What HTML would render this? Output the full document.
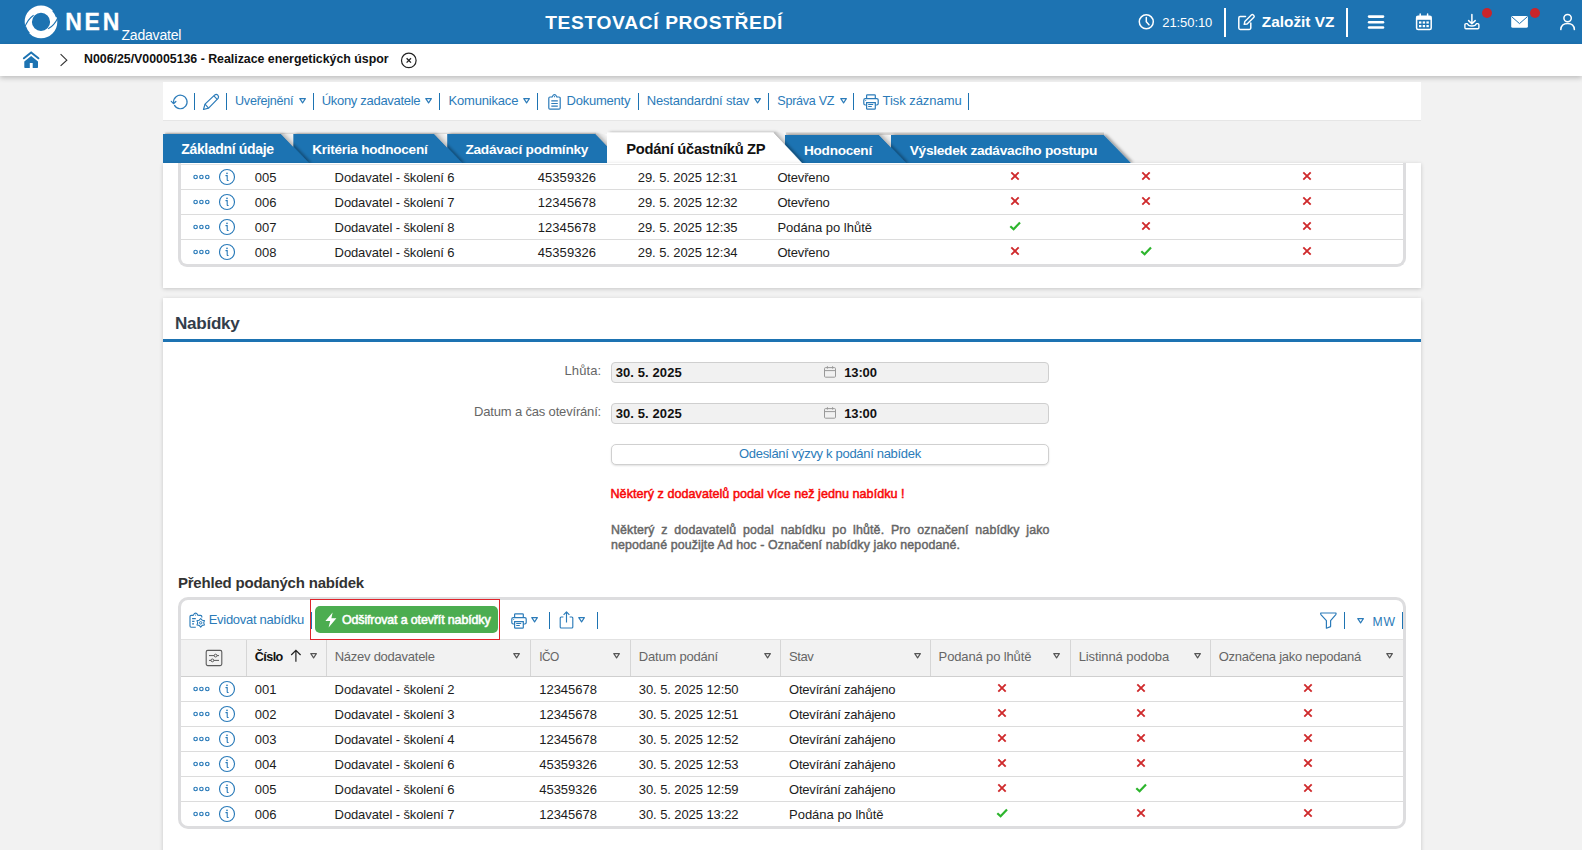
<!DOCTYPE html>
<html lang="cs"><head><meta charset="utf-8"><title>NEN - Zadavatel</title>
<style>
html,body{margin:0;padding:0}
body{width:1582px;height:850px;overflow:hidden;background:#f2f2f2;font-family:"Liberation Sans",sans-serif;color:#1c1c1c;position:relative}
span{position:absolute;white-space:pre;line-height:1}
div,svg,p{position:absolute;margin:0}
svg{overflow:visible}
.hdr{left:0;top:0;width:1582px;height:44px;background:#1d73b2;color:#fff}
.crumb{left:0;top:44px;width:1582px;height:32px;background:#fff;box-shadow:0 2px 5px rgba(0,0,0,.22)}
.tbar{left:163px;top:82px;width:1258px;height:38px;background:#fff;border-bottom:1px solid #e6e6e6;color:#2b7bb9}
.sep{width:1px;background:#1d73b2}
.card{background:#fff;box-shadow:0 1px 4px rgba(0,0,0,.18)}
.row{left:0;width:100%;height:24px;border-bottom:1px solid #dcdcdc}
</style></head><body>

<div class="hdr">
<svg style="left:0;top:0" width="200" height="44" viewBox="0 0 200 44">
<circle cx="41" cy="21.9" r="12.7" fill="none" stroke="#fff" stroke-width="7.2"/>
<path d="M24.4 28.4C26.2 22.6 28.6 18.6 33.6 15.2" fill="none" stroke="#1d73b2" stroke-width="1.1"/>
<path d="M57.6 18.2C55.6 22.6 53.2 26 48.2 28.8" fill="none" stroke="#1d73b2" stroke-width="1.1"/>
<path d="M25.41 26.67A16.3 16.3 0 0 0 29.27 33.22" fill="none" stroke="#1d73b2" stroke-width="1.5"/>
<path d="M56.59 17.13A16.3 16.3 0 0 0 52.73 10.58" fill="none" stroke="#1d73b2" stroke-width="1.5"/>
</svg>
<span style="left:65.20px;top:11px;font-size:23px;font-weight:700;color:#fff;letter-spacing:2.819px;-webkit-text-stroke:0.3px currentColor">NEN</span>
<span style="left:121.50px;top:28px;font-size:14px;color:#fff;letter-spacing:-0.198px">Zadavatel</span>
<span style="left:545.20px;top:13px;font-size:19.2px;font-weight:700;color:#fff;letter-spacing:0.660px">TESTOVACÍ PROSTŘEDÍ</span>
<svg style="left:1136px;top:12px" width="22" height="22" viewBox="0 0 22 22"><circle cx="10.3" cy="9.8" r="7" fill="none" stroke="#fff" stroke-width="1.5"/><path d="M10.3 5.4V9.8L13 12.8" fill="none" stroke="#fff" stroke-width="1.5" stroke-linecap="round"/></svg>
<span style="left:1162.30px;top:16px;font-size:13px;color:#fff;letter-spacing:-0.087px">21:50:10</span>
<div style="left:1224px;top:8px;width:2px;height:29px;background:#fff"></div>
<svg style="left:1236px;top:12px" width="22" height="22" viewBox="0 0 22 22"><path d="M9.5 4.5H4.2Q2.8 4.5 2.8 5.9V16Q2.8 17.4 4.2 17.4H13.4Q14.8 17.4 14.8 16V11" fill="none" stroke="#fff" stroke-width="1.5" stroke-linecap="round"/><path d="M8.2 12.4L8.8 9.6L15.6 2.8Q16.4 2.2 17.3 3L18 3.8Q18.6 4.6 17.9 5.3L11.1 12Z" fill="none" stroke="#fff" stroke-width="1.4" stroke-linejoin="round"/></svg>
<span style="left:1261.80px;top:14px;font-size:15.4px;font-weight:700;color:#fff;letter-spacing:-0.010px">Založit VZ</span>
<div style="left:1346px;top:8px;width:2px;height:29px;background:#fff"></div>
<svg style="left:1366px;top:12px" width="22" height="22" viewBox="0 0 22 22"><g stroke="#fff" stroke-width="2.6" stroke-linecap="round"><path d="M3.1 4.6H17"/><path d="M3.1 10.2H17"/><path d="M3.1 15.5H17"/></g></svg>
<svg style="left:1414px;top:12px" width="22" height="22" viewBox="0 0 22 22"><rect x="2.6" y="4.2" width="14.6" height="13.2" rx="1.5" fill="none" stroke="#fff" stroke-width="1.5"/><rect x="2.6" y="4.2" width="14.6" height="3.6" fill="#fff"/><path d="M6.2 2V5M13.6 2V5" stroke="#fff" stroke-width="1.5" stroke-linecap="round"/><g fill="#fff"><rect x="5" y="9.4" width="2.4" height="2.2"/><rect x="8.7" y="9.4" width="2.4" height="2.2"/><rect x="12.4" y="9.4" width="2.4" height="2.2"/><rect x="5" y="13" width="2.4" height="2.2"/><rect x="8.7" y="13" width="2.4" height="2.2"/><rect x="12.4" y="13" width="2.4" height="2.2"/></g></svg>
<svg style="left:1462px;top:12px" width="22" height="22" viewBox="0 0 22 22"><path d="M9.9 2.4V11.6M6.6 8.6L9.9 11.8L13.2 8.6" fill="none" stroke="#fff" stroke-width="1.5" stroke-linecap="round" stroke-linejoin="round"/><path d="M5.4 11.6H4Q2.9 11.6 2.9 12.7V15.6Q2.9 16.8 4 16.8H15.8Q16.9 16.8 16.9 15.6V12.7Q16.9 11.6 15.8 11.6H14.4Q13.6 14 9.9 14Q6.2 14 5.4 11.6Z" fill="none" stroke="#fff" stroke-width="1.4" stroke-linejoin="round"/></svg>
<div style="left:1482px;top:8.2px;width:10px;height:10px;border-radius:50%;background:#c9252b"></div>
<svg style="left:1509px;top:12px" width="22" height="22" viewBox="0 0 22 22"><rect x="2.2" y="3.9" width="16.7" height="11.9" rx="1.6" fill="#fff"/><path d="M3 5L10.5 11.6L18 5" fill="none" stroke="#1d73b2" stroke-width="1"/></svg>
<div style="left:1530px;top:8.2px;width:10px;height:10px;border-radius:50%;background:#c9252b"></div>
<svg style="left:1558px;top:12px" width="22" height="22" viewBox="0 0 22 22"><circle cx="9.6" cy="6.1" r="3.7" fill="none" stroke="#fff" stroke-width="1.5"/><path d="M2.8 17.6Q3.2 11.6 9.6 11.6Q16 11.6 16.4 17.6" fill="none" stroke="#fff" stroke-width="1.5" stroke-linecap="round"/></svg>
</div>
<div class="crumb">
<svg style="left:22px;top:6px" width="20" height="20" viewBox="0 0 20 20"><path d="M1.9 8.3L9.15 2.5L16.4 8.3" fill="none" stroke="#1d73b2" stroke-width="2" stroke-linecap="round" stroke-linejoin="miter"/><path d="M2.3 11.5L9.15 6.1L16 11.5V17.2Q16 17.9 15.3 17.9H10.7V13H7.8V17.9H3Q2.3 17.9 2.3 17.2Z" fill="#1d73b2"/></svg>
<svg style="left:58px;top:8px" width="12" height="16" viewBox="0 0 12 16"><path d="M2.6 2.2L8.8 8.2L2.6 13.9" fill="none" stroke="#333" stroke-width="1.15"/></svg>
<span style="left:84.00px;top:9px;font-size:12.4px;font-weight:700;color:#111;letter-spacing:-0.026px">N006/25/V00005136 - Realizace energetických úspor</span>
<svg style="left:400px;top:7.5px" width="18" height="18" viewBox="0 0 18 18"><circle cx="8.8" cy="8.4" r="7.3" fill="none" stroke="#222" stroke-width="1.2"/><path d="M6.6 6.2L11 10.6M11 6.2L6.6 10.6" stroke="#222" stroke-width="1.3"/></svg>
</div>
<div class="tbar">
<svg style="left:7px;top:9px" width="20" height="20" viewBox="0 0 20 20"><path d="M3.6 11.5A6.75 6.75 0 1 1 4.5 14.4" fill="none" stroke="#2b7bb9" stroke-width="1.2" stroke-linecap="round"/><path d="M1.3 10.3L3.5 12.7L5.9 10.5" fill="none" stroke="#2b7bb9" stroke-width="1.2" stroke-linecap="round" stroke-linejoin="round"/></svg>
<div class="sep" style="left:30.8px;top:11px;height:17px"></div>
<svg style="left:39px;top:9px" width="20" height="20" viewBox="0 0 20 20"><path d="M1.5 18.5L3 13.1L12.8 3.9Q14.4 2.8 15.8 4.2Q17.2 5.8 16.1 7.3L6.6 17.2Z" fill="none" stroke="#2b7bb9" stroke-width="1.2" stroke-linejoin="round"/><path d="M11.9 4.8L15.2 8.3" stroke="#2b7bb9" stroke-width="1.1"/><path d="M3 13.1L6.6 17.2" stroke="#2b7bb9" stroke-width="1.1"/></svg>
<div class="sep" style="left:62.9px;top:11px;height:17px"></div>
<span style="left:72.00px;top:13px;font-size:12.6px;color:#2b7bb9;letter-spacing:-0.256px">Uveřejnění</span>
<svg style="left:135.5px;top:16.4px" width="7.2" height="5.8" viewBox="0 0 7.2 5.8"><path d="M0.8 0.6H6.4L3.6 4.8999999999999995Z" fill="none" stroke="#2b7bb9" stroke-width="1.15" stroke-linejoin="round"/></svg>
<div class="sep" style="left:149.8px;top:11px;height:17px"></div>
<span style="left:158.70px;top:12px;font-size:13px;color:#2b7bb9;letter-spacing:-0.303px">Úkony zadavatele</span>
<svg style="left:262.0px;top:16.4px" width="7.2" height="5.8" viewBox="0 0 7.2 5.8"><path d="M0.8 0.6H6.4L3.6 4.8999999999999995Z" fill="none" stroke="#2b7bb9" stroke-width="1.15" stroke-linejoin="round"/></svg>
<div class="sep" style="left:276.0px;top:11px;height:17px"></div>
<span style="left:285.50px;top:12px;font-size:13px;color:#2b7bb9;letter-spacing:-0.183px">Komunikace</span>
<svg style="left:360.4px;top:16.4px" width="7.2" height="5.8" viewBox="0 0 7.2 5.8"><path d="M0.8 0.6H6.4L3.6 4.8999999999999995Z" fill="none" stroke="#2b7bb9" stroke-width="1.15" stroke-linejoin="round"/></svg>
<div class="sep" style="left:374.1px;top:11px;height:17px"></div>
<svg style="left:383px;top:10px" width="18" height="20" viewBox="0 0 18 20"><path d="M6 5H4Q2.8 5 2.8 6.2V15.9Q2.8 17.1 4 17.1H13Q14.2 17.1 14.2 15.9V6.2Q14.2 5 13 5H11" fill="none" stroke="#2b7bb9" stroke-width="1.2"/><path d="M5.8 5.2Q6.6 4.8 6.7 4Q7.2 2.6 8.5 2.6Q9.8 2.6 10.3 4Q10.4 4.8 11.2 5.2" fill="none" stroke="#2b7bb9" stroke-width="1.1" stroke-linejoin="round"/><circle cx="8.5" cy="4.7" r="0.6" fill="#2b7bb9"/><path d="M5.3 8.9H11.8M5.3 11.5H11.8M5.3 14.1H11.8" stroke="#2b7bb9" stroke-width="1.2"/></svg>
<span style="left:403.50px;top:12px;font-size:13px;color:#2b7bb9;letter-spacing:-0.231px">Dokumenty</span>
<div class="sep" style="left:475.2px;top:11px;height:17px"></div>
<span style="left:483.80px;top:12px;font-size:13px;color:#2b7bb9;letter-spacing:-0.195px">Nestandardní stav</span>
<svg style="left:591.0px;top:16.4px" width="7.2" height="5.8" viewBox="0 0 7.2 5.8"><path d="M0.8 0.6H6.4L3.6 4.8999999999999995Z" fill="none" stroke="#2b7bb9" stroke-width="1.15" stroke-linejoin="round"/></svg>
<div class="sep" style="left:605.2px;top:11px;height:17px"></div>
<span style="left:614.30px;top:13px;font-size:12.6px;color:#2b7bb9;letter-spacing:-0.287px">Správa VZ</span>
<svg style="left:676.5px;top:16.4px" width="7.2" height="5.8" viewBox="0 0 7.2 5.8"><path d="M0.8 0.6H6.4L3.6 4.8999999999999995Z" fill="none" stroke="#2b7bb9" stroke-width="1.15" stroke-linejoin="round"/></svg>
<div class="sep" style="left:690.2px;top:11px;height:17px"></div>
<svg style="left:698px;top:10px" width="20" height="20" viewBox="0 0 20 20"><path d="M5.6 6.7V3.6Q5.6 2.8 6.4 2.8H13.5Q14.3 2.8 14.3 3.6V6.7" fill="none" stroke="#2b7bb9" stroke-width="1.2"/><path d="M5.6 13H4.2Q2.8 13 2.8 11.6V8.1Q2.8 6.7 4.2 6.7H15.8Q17.2 6.7 17.2 8.1V11.6Q17.2 13 15.8 13H14.3" fill="none" stroke="#2b7bb9" stroke-width="1.2"/><path d="M5.6 10.6H14.3V16.4Q14.3 17.2 13.5 17.2H6.4Q5.6 17.2 5.6 16.4Z" fill="none" stroke="#2b7bb9" stroke-width="1.2"/><path d="M7.2 12.5H12.2M7.2 14.5H10.8" stroke="#2b7bb9" stroke-width="1.1"/><circle cx="4.7" cy="8.5" r="0.55" fill="#2b7bb9"/></svg>
<span style="left:719.50px;top:12px;font-size:13px;color:#2b7bb9;letter-spacing:-0.047px">Tisk záznamu</span>
<div class="sep" style="left:805.4px;top:11px;height:17px"></div>
</div>
<svg style="left:0;top:0" width="1582" height="170" viewBox="0 0 1582 170">
<defs><filter id="ts" x="-10%" y="-40%" width="130%" height="180%"><feDropShadow dx="2.6" dy="-0.2" stdDeviation="1.6" flood-color="#000" flood-opacity=".36"/></filter><linearGradient id="tg" x1="0" y1="1" x2="1" y2="0"><stop offset=".5" stop-color="#b9b9b9"/><stop offset=".72" stop-color="#e4e4e4"/><stop offset="1" stop-color="#fdfdfd"/></linearGradient></defs>
<rect x="786" y="132.4" width="318" height="3" fill="#d3d1cf"/><rect x="165" y="132.7" width="431" height="1.6" fill="#dad8d6"/>
<g filter="url(#ts)"><polygon points="891,135 1103.7,135 1130.9,163 891,163" fill="#1d73b2"/></g>
<g filter="url(#ts)"><polygon points="784.9,135 879,135 906.1,163 784.9,163" fill="#1d73b2"/></g>
<g filter="url(#ts)"><polygon points="447.1,134 595.5,134 623.4,163 447.1,163" fill="#1d73b2"/></g>
<g filter="url(#ts)"><polygon points="293.2,134 434.2,134 462.1,163 293.2,163" fill="#1d73b2"/></g>
<g filter="url(#ts)"><polygon points="163,134 281,134 308.9,163 163,163" fill="#1d73b2"/></g>
<g filter="url(#ts)"><polygon points="607,132.4 773.5,132.4 802.4,163.4 607,163.4" fill="#fff"/></g>
<polygon points="281,134 293.2,134 293.2,146.7" fill="url(#tg)"/><polygon points="434.2,134 447.1,134 447.1,147.4" fill="url(#tg)"/><polygon points="595.5,134 607,134 607,146" fill="url(#tg)"/><polygon points="773.5,132.4 784.9,132.4 784.9,144.6" fill="url(#tg)"/><polygon points="879,135 891,135 891,147.4" fill="url(#tg)"/>
</svg>
<span style="left:181.30px;top:142px;font-size:14px;font-weight:700;color:#fff;letter-spacing:-0.350px">Základní údaje</span>
<span style="left:312.20px;top:143px;font-size:13.6px;font-weight:700;color:#fff;letter-spacing:-0.270px">Kritéria hodnocení</span>
<span style="left:465.40px;top:143px;font-size:13.7px;font-weight:700;color:#fff;letter-spacing:-0.246px">Zadávací podmínky</span>
<span style="left:626.30px;top:142px;font-size:14.7px;font-weight:700;color:#111;letter-spacing:-0.286px">Podání účastníků ZP</span>
<span style="left:804.00px;top:144px;font-size:13.6px;font-weight:700;color:#fff;letter-spacing:-0.254px">Hodnocení</span>
<span style="left:909.70px;top:144px;font-size:13.7px;font-weight:700;color:#fff;letter-spacing:-0.274px">Výsledek zadávacího postupu</span>
<div class="card" style="left:163px;top:163px;width:1258px;height:125px;overflow:hidden">
<div style="left:15px;top:-6px;width:1222px;height:107px;border:3px solid #dddddf;border-top:none;border-radius:0 0 9px 9px;overflow:hidden">
<div style="left:0;top:7px;width:100%;height:1px;background:#e4e4e4"></div>
<div class="row" style="top:8px;">
<svg style="left:11.6px;top:9.0px" width="18" height="6" viewBox="0 0 18 6"><g fill="none" stroke="#2b7bb9" stroke-width="1.2"><circle cx="2.6" cy="3" r="1.75"/><circle cx="8.4" cy="3" r="1.75"/><circle cx="14.3" cy="3" r="1.75"/></g></svg>
<svg style="left:36.9px;top:3.0px" width="18" height="18" viewBox="0 0 18 18"><circle cx="9" cy="9" r="7.5" fill="none" stroke="#2b7bb9" stroke-width="1.15"/><circle cx="9" cy="5.3" r="0.85" fill="#2b7bb9"/><path d="M7.9 7.6H9.2V12Q9.2 12.6 10.2 12.5" fill="none" stroke="#2b7bb9" stroke-width="1.1" stroke-linecap="round"/></svg>
<span style="left:73.70px;top:6px;font-size:13px">005</span>
<span style="left:153.60px;top:6px;font-size:13px;letter-spacing:-0.106px">Dodavatel - školení 6</span>
<span style="left:356.70px;top:6px;font-size:13px;letter-spacing:0.079px">45359326</span>
<span style="left:456.80px;top:6px;font-size:13px;letter-spacing:-0.088px">29. 5. 2025 12:31</span>
<span style="left:596.40px;top:6px;font-size:13px;letter-spacing:-0.169px">Otevřeno</span>
<svg style="left:829.3px;top:6.2px" width="10" height="10" viewBox="0 0 10 10"><path d="M1.3 1.4L8.7 8.6M8.7 1.4L1.3 8.6" stroke="#cf2a2c" stroke-width="1.9" stroke-linecap="butt"/></svg>
<svg style="left:959.5px;top:6.2px" width="10" height="10" viewBox="0 0 10 10"><path d="M1.3 1.4L8.7 8.6M8.7 1.4L1.3 8.6" stroke="#cf2a2c" stroke-width="1.9" stroke-linecap="butt"/></svg>
<svg style="left:1121.1px;top:6.2px" width="10" height="10" viewBox="0 0 10 10"><path d="M1.3 1.4L8.7 8.6M8.7 1.4L1.3 8.6" stroke="#cf2a2c" stroke-width="1.9" stroke-linecap="butt"/></svg>
</div>
<div class="row" style="top:33px;">
<svg style="left:11.6px;top:9.0px" width="18" height="6" viewBox="0 0 18 6"><g fill="none" stroke="#2b7bb9" stroke-width="1.2"><circle cx="2.6" cy="3" r="1.75"/><circle cx="8.4" cy="3" r="1.75"/><circle cx="14.3" cy="3" r="1.75"/></g></svg>
<svg style="left:36.9px;top:3.0px" width="18" height="18" viewBox="0 0 18 18"><circle cx="9" cy="9" r="7.5" fill="none" stroke="#2b7bb9" stroke-width="1.15"/><circle cx="9" cy="5.3" r="0.85" fill="#2b7bb9"/><path d="M7.9 7.6H9.2V12Q9.2 12.6 10.2 12.5" fill="none" stroke="#2b7bb9" stroke-width="1.1" stroke-linecap="round"/></svg>
<span style="left:73.70px;top:6px;font-size:13px">006</span>
<span style="left:153.60px;top:6px;font-size:13px;letter-spacing:-0.106px">Dodavatel - školení 7</span>
<span style="left:356.70px;top:6px;font-size:13px;letter-spacing:0.079px">12345678</span>
<span style="left:456.80px;top:6px;font-size:13px;letter-spacing:-0.088px">29. 5. 2025 12:32</span>
<span style="left:596.40px;top:6px;font-size:13px;letter-spacing:-0.169px">Otevřeno</span>
<svg style="left:829.3px;top:6.2px" width="10" height="10" viewBox="0 0 10 10"><path d="M1.3 1.4L8.7 8.6M8.7 1.4L1.3 8.6" stroke="#cf2a2c" stroke-width="1.9" stroke-linecap="butt"/></svg>
<svg style="left:959.5px;top:6.2px" width="10" height="10" viewBox="0 0 10 10"><path d="M1.3 1.4L8.7 8.6M8.7 1.4L1.3 8.6" stroke="#cf2a2c" stroke-width="1.9" stroke-linecap="butt"/></svg>
<svg style="left:1121.1px;top:6.2px" width="10" height="10" viewBox="0 0 10 10"><path d="M1.3 1.4L8.7 8.6M8.7 1.4L1.3 8.6" stroke="#cf2a2c" stroke-width="1.9" stroke-linecap="butt"/></svg>
</div>
<div class="row" style="top:58px;">
<svg style="left:11.6px;top:9.0px" width="18" height="6" viewBox="0 0 18 6"><g fill="none" stroke="#2b7bb9" stroke-width="1.2"><circle cx="2.6" cy="3" r="1.75"/><circle cx="8.4" cy="3" r="1.75"/><circle cx="14.3" cy="3" r="1.75"/></g></svg>
<svg style="left:36.9px;top:3.0px" width="18" height="18" viewBox="0 0 18 18"><circle cx="9" cy="9" r="7.5" fill="none" stroke="#2b7bb9" stroke-width="1.15"/><circle cx="9" cy="5.3" r="0.85" fill="#2b7bb9"/><path d="M7.9 7.6H9.2V12Q9.2 12.6 10.2 12.5" fill="none" stroke="#2b7bb9" stroke-width="1.1" stroke-linecap="round"/></svg>
<span style="left:73.70px;top:6px;font-size:13px">007</span>
<span style="left:153.60px;top:6px;font-size:13px;letter-spacing:-0.106px">Dodavatel - školení 8</span>
<span style="left:356.70px;top:6px;font-size:13px;letter-spacing:0.079px">12345678</span>
<span style="left:456.80px;top:6px;font-size:13px;letter-spacing:-0.088px">29. 5. 2025 12:35</span>
<span style="left:596.40px;top:6px;font-size:13px;letter-spacing:-0.007px">Podána po lhůtě</span>
<svg style="left:828.3px;top:6.2px" width="12" height="10" viewBox="0 0 12 10"><path d="M1.3 5.2L4.6 8.3L11 1.5" fill="none" stroke="#2db52d" stroke-width="2.2"/></svg>
<svg style="left:959.5px;top:6.2px" width="10" height="10" viewBox="0 0 10 10"><path d="M1.3 1.4L8.7 8.6M8.7 1.4L1.3 8.6" stroke="#cf2a2c" stroke-width="1.9" stroke-linecap="butt"/></svg>
<svg style="left:1121.1px;top:6.2px" width="10" height="10" viewBox="0 0 10 10"><path d="M1.3 1.4L8.7 8.6M8.7 1.4L1.3 8.6" stroke="#cf2a2c" stroke-width="1.9" stroke-linecap="butt"/></svg>
</div>
<div class="row" style="top:83px;border-bottom:none;">
<svg style="left:11.6px;top:9.0px" width="18" height="6" viewBox="0 0 18 6"><g fill="none" stroke="#2b7bb9" stroke-width="1.2"><circle cx="2.6" cy="3" r="1.75"/><circle cx="8.4" cy="3" r="1.75"/><circle cx="14.3" cy="3" r="1.75"/></g></svg>
<svg style="left:36.9px;top:3.0px" width="18" height="18" viewBox="0 0 18 18"><circle cx="9" cy="9" r="7.5" fill="none" stroke="#2b7bb9" stroke-width="1.15"/><circle cx="9" cy="5.3" r="0.85" fill="#2b7bb9"/><path d="M7.9 7.6H9.2V12Q9.2 12.6 10.2 12.5" fill="none" stroke="#2b7bb9" stroke-width="1.1" stroke-linecap="round"/></svg>
<span style="left:73.70px;top:6px;font-size:13px">008</span>
<span style="left:153.60px;top:6px;font-size:13px;letter-spacing:-0.106px">Dodavatel - školení 6</span>
<span style="left:356.70px;top:6px;font-size:13px;letter-spacing:0.079px">45359326</span>
<span style="left:456.80px;top:6px;font-size:13px;letter-spacing:-0.088px">29. 5. 2025 12:34</span>
<span style="left:596.40px;top:6px;font-size:13px;letter-spacing:-0.169px">Otevřeno</span>
<svg style="left:829.3px;top:6.2px" width="10" height="10" viewBox="0 0 10 10"><path d="M1.3 1.4L8.7 8.6M8.7 1.4L1.3 8.6" stroke="#cf2a2c" stroke-width="1.9" stroke-linecap="butt"/></svg>
<svg style="left:958.5px;top:6.2px" width="12" height="10" viewBox="0 0 12 10"><path d="M1.3 5.2L4.6 8.3L11 1.5" fill="none" stroke="#2db52d" stroke-width="2.2"/></svg>
<svg style="left:1121.1px;top:6.2px" width="10" height="10" viewBox="0 0 10 10"><path d="M1.3 1.4L8.7 8.6M8.7 1.4L1.3 8.6" stroke="#cf2a2c" stroke-width="1.9" stroke-linecap="butt"/></svg>
</div>
</div></div>
<div class="card" style="left:163px;top:298px;width:1258px;height:570px">
<span style="left:12.00px;top:17px;font-size:17.1px;font-weight:700;color:#333d4a;letter-spacing:-0.283px">Nabídky</span>
<div style="left:0;top:41px;width:1258px;height:3px;background:#1d73b2"></div>
<span style="left:401.50px;top:66px;font-size:13px;color:#666;letter-spacing:0.109px">Lhůta:</span>
<span style="left:311.10px;top:107px;font-size:13px;color:#666;letter-spacing:-0.175px">Datum a čas otevírání:</span>
<div style="left:448px;top:64px;width:436px;height:19px;border:1px solid #cfcfcf;border-radius:4px;background:#f1f1f1">
<span style="left:3.70px;top:3px;font-size:13px;font-weight:700;color:#111;letter-spacing:0.094px">30. 5. 2025</span>
<svg style="left:211.0px;top:2.4px" width="14" height="14" viewBox="0 0 14 14"><rect x="1.5" y="2.6" width="11" height="9.6" rx="1" fill="none" stroke="#999" stroke-width="1"/><path d="M1.5 5.6H12.5M4.4 1.2V3.6M9.6 1.2V3.6" stroke="#999" stroke-width="1"/></svg>
<span style="left:232.30px;top:3px;font-size:13px;font-weight:700;color:#111;letter-spacing:-0.162px">13:00</span>
</div>
<div style="left:448px;top:105px;width:436px;height:19px;border:1px solid #cfcfcf;border-radius:4px;background:#f1f1f1">
<span style="left:3.70px;top:3px;font-size:13px;font-weight:700;color:#111;letter-spacing:0.094px">30. 5. 2025</span>
<svg style="left:211.0px;top:2.4px" width="14" height="14" viewBox="0 0 14 14"><rect x="1.5" y="2.6" width="11" height="9.6" rx="1" fill="none" stroke="#999" stroke-width="1"/><path d="M1.5 5.6H12.5M4.4 1.2V3.6M9.6 1.2V3.6" stroke="#999" stroke-width="1"/></svg>
<span style="left:232.30px;top:3px;font-size:13px;font-weight:700;color:#111;letter-spacing:-0.162px">13:00</span>
</div>
<div style="left:448px;top:146px;width:436px;height:19px;border:1px solid #d0d0d0;border-radius:5px;background:#fff;box-shadow:0 1px 2px rgba(0,0,0,.12)">
<span style="left:127.00px;top:2px;font-size:13px;color:#2b7bb9;letter-spacing:-0.311px">Odeslání výzvy k podání nabídek</span>
</div>
<span style="left:447.50px;top:190px;font-size:12.6px;color:#f80808;letter-spacing:0.029px;-webkit-text-stroke:0.5px currentColor">Některý z dodavatelů podal více než jednu nabídku !</span>
<p style="left:448px;top:225px;width:438.6px;font-size:12.4px;line-height:14.5px;color:#666;text-align:justify;-webkit-text-stroke:0.45px #666;letter-spacing:0.127px">Některý z dodavatelů podal nabídku po lhůtě. Pro označení nabídky jako nepodané použijte Ad hoc - Označení nabídky jako nepodané.</p>
<span style="left:14.90px;top:277px;font-size:15px;font-weight:700;color:#333;letter-spacing:-0.200px">Přehled podaných nabídek</span>
<div style="left:15px;top:299px;width:1222px;height:226px;border:3px solid #dddddf;border-radius:10px;overflow:hidden;background:#fff">
<svg style="left:7px;top:11px" width="20" height="20" viewBox="0 0 20 20"><path d="M5 4.4H3.2Q2 4.4 2 5.6V15Q2 16.2 3.2 16.2H7.8" fill="none" stroke="#2b7bb9" stroke-width="1.15"/><path d="M10.2 4.4H12.6Q13.8 4.4 13.8 5.6V6.6" fill="none" stroke="#2b7bb9" stroke-width="1.15"/><path d="M4.8 4.6Q5.7 4.2 5.8 3.4Q6.3 2.1 7.6 2.1Q8.9 2.1 9.4 3.4Q9.5 4.2 10.4 4.6" fill="none" stroke="#2b7bb9" stroke-width="1.1"/><circle cx="7.6" cy="4.1" r="0.55" fill="#2b7bb9"/><path d="M4.1 7.6H7.8M4.1 10.3H6.5M4.1 12.9H6" stroke="#2b7bb9" stroke-width="1.2"/><polygon points="12.70,7.50 14.20,9.20 16.42,9.65 15.70,11.80 16.42,13.95 14.20,14.40 12.70,16.10 11.20,14.40 8.98,13.95 9.70,11.80 8.98,9.65 11.20,9.20" fill="none" stroke="#2b7bb9" stroke-width="1.1" stroke-linejoin="round"/><circle cx="12.7" cy="11.8" r="1.2" fill="none" stroke="#2b7bb9" stroke-width="1"/></svg>
<span style="left:27.70px;top:13px;font-size:13px;color:#2b7bb9;letter-spacing:-0.282px">Evidovat nabídku</span>
<div class="sep" style="left:129.6px;top:11.5px;height:17.5px"></div>
<div style="left:134.39999999999998px;top:6.2000000000000455px;width:183px;height:27.2px;border-radius:5px;background:#4cad50">
<svg style="left:8.6px;top:6.2px" width="14" height="16" viewBox="0 0 14 16"><path d="M8.6 0.6L1.4 9H6.2L4.6 15.4L12.4 6.2H7.4Z" fill="#fff"/></svg>
<span style="left:26.60px;top:7.8px;font-size:12.4px;color:#fff;letter-spacing:-0.108px;-webkit-text-stroke:0.55px currentColor">Odšifrovat a otevřít nabídky</span>
</div>
<svg style="left:328px;top:11px" width="20" height="20" viewBox="0 0 20 20"><path d="M5.6 6.7V3.6Q5.6 2.8 6.4 2.8H13.5Q14.3 2.8 14.3 3.6V6.7" fill="none" stroke="#2b7bb9" stroke-width="1.2"/><path d="M5.6 13H4.2Q2.8 13 2.8 11.6V8.1Q2.8 6.7 4.2 6.7H15.8Q17.2 6.7 17.2 8.1V11.6Q17.2 13 15.8 13H14.3" fill="none" stroke="#2b7bb9" stroke-width="1.2"/><path d="M5.6 10.6H14.3V16.4Q14.3 17.2 13.5 17.2H6.4Q5.6 17.2 5.6 16.4Z" fill="none" stroke="#2b7bb9" stroke-width="1.2"/><path d="M7.2 12.5H12.2M7.2 14.5H10.8" stroke="#2b7bb9" stroke-width="1.1"/><circle cx="4.7" cy="8.5" r="0.55" fill="#2b7bb9"/></svg>
<svg style="left:349.8px;top:17.3px" width="7.2" height="5.8" viewBox="0 0 7.2 5.8"><path d="M0.8 0.6H6.4L3.6 4.8999999999999995Z" fill="none" stroke="#2b7bb9" stroke-width="1.15" stroke-linejoin="round"/></svg>
<div class="sep" style="left:368.1px;top:11.5px;height:17.5px"></div>
<svg style="left:377px;top:10px" width="18" height="20" viewBox="0 0 18 20"><path d="M5.4 7H3.2Q2.2 7 2.2 8V17Q2.2 18 3.2 18H13.8Q14.8 18 14.8 17V8Q14.8 7 13.8 7H11.6" fill="none" stroke="#2b7bb9" stroke-width="1.15"/><path d="M8.5 12.4V2M5.6 4.8L8.5 1.9L11.4 4.8" fill="none" stroke="#2b7bb9" stroke-width="1.15" stroke-linejoin="round"/></svg>
<svg style="left:397.4px;top:17.3px" width="7.2" height="5.8" viewBox="0 0 7.2 5.8"><path d="M0.8 0.6H6.4L3.6 4.8999999999999995Z" fill="none" stroke="#2b7bb9" stroke-width="1.15" stroke-linejoin="round"/></svg>
<div class="sep" style="left:416.1px;top:11.5px;height:17.5px"></div>
<svg style="left:1138px;top:10.5px" width="20" height="20" viewBox="0 0 20 20"><path d="M1.9 2H16.8Q17.4 2.6 16.8 3.6L11.6 9.6V15.6L7.4 17.2V9.6L1.9 3.6Q1.4 2.6 1.9 2Z" fill="none" stroke="#2b7bb9" stroke-width="1.2" stroke-linejoin="round"/></svg>
<div class="sep" style="left:1162.8px;top:11.5px;height:17.5px"></div>
<svg style="left:1176.0px;top:17.7px" width="7.2" height="5.8" viewBox="0 0 7.2 5.8"><path d="M0.8 0.6H6.4L3.6 4.8999999999999995Z" fill="none" stroke="#2b7bb9" stroke-width="1.15" stroke-linejoin="round"/></svg>
<span style="left:1191.50px;top:16px;font-size:12.2px;color:#2b7bb9;letter-spacing:0.944px">MW</span>
<div class="sep" style="left:1220.7px;top:11.5px;height:17.5px"></div>
<div style="left:0;top:39px;width:100%;height:36px;background:#f2f2f2;border-top:1px solid #e2e2e2;border-bottom:1px solid #cfcfcf;box-sizing:content-box">
<div style="left:64.9px;top:0;width:1px;height:36px;background:#d6d6d6"></div>
<div style="left:144.8px;top:0;width:1px;height:36px;background:#d6d6d6"></div>
<div style="left:348.8px;top:0;width:1px;height:36px;background:#d6d6d6"></div>
<div style="left:449.0px;top:0;width:1px;height:36px;background:#d6d6d6"></div>
<div style="left:598.7px;top:0;width:1px;height:36px;background:#d6d6d6"></div>
<div style="left:748.8px;top:0;width:1px;height:36px;background:#d6d6d6"></div>
<div style="left:888.9px;top:0;width:1px;height:36px;background:#d6d6d6"></div>
<div style="left:1029.0px;top:0;width:1px;height:36px;background:#d6d6d6"></div>
<svg style="left:24px;top:8.600000000000023px" width="18" height="18" viewBox="0 0 18 18"><rect x="1.2" y="1.4" width="15.6" height="15.2" rx="1.6" fill="none" stroke="#5a5a5a" stroke-width="1.1"/><path d="M4 6.6H14M4 11.4H14" stroke="#5a5a5a" stroke-width="1"/><circle cx="10.6" cy="6.6" r="1.4" fill="#f2f2f2" stroke="#5a5a5a" stroke-width="1"/><circle cx="7.4" cy="11.4" r="1.4" fill="#f2f2f2" stroke="#5a5a5a" stroke-width="1"/></svg>
<span style="left:73.80px;top:11px;font-size:12.6px;font-weight:700;color:#111;letter-spacing:-0.574px">Číslo</span>
<svg style="left:108px;top:9px" width="14" height="14" viewBox="0 0 14 14"><path d="M6.9 12.8V1.4M2.2 6L6.9 1.3L11.6 6" fill="none" stroke="#222" stroke-width="1.2"/></svg>
<svg style="left:128.6px;top:13.3px" width="7.2" height="5.8" viewBox="0 0 7.2 5.8"><path d="M0.8 0.6H6.4L3.6 4.8999999999999995Z" fill="none" stroke="#555" stroke-width="1.15" stroke-linejoin="round"/></svg>
<span style="left:153.70px;top:10px;font-size:13px;color:#666;letter-spacing:-0.252px">Název dodavatele</span>
<svg style="left:332.4px;top:13.3px" width="7.2" height="5.8" viewBox="0 0 7.2 5.8"><path d="M0.8 0.6H6.4L3.6 4.8999999999999995Z" fill="none" stroke="#555" stroke-width="1.15" stroke-linejoin="round"/></svg>
<span style="left:358.20px;top:12px;font-size:11.9px;color:#666;letter-spacing:-0.570px">IČO</span>
<svg style="left:432.3px;top:13.3px" width="7.2" height="5.8" viewBox="0 0 7.2 5.8"><path d="M0.8 0.6H6.4L3.6 4.8999999999999995Z" fill="none" stroke="#555" stroke-width="1.15" stroke-linejoin="round"/></svg>
<span style="left:457.80px;top:10px;font-size:13px;color:#666;letter-spacing:-0.207px">Datum podání</span>
<svg style="left:582.5px;top:13.3px" width="7.2" height="5.8" viewBox="0 0 7.2 5.8"><path d="M0.8 0.6H6.4L3.6 4.8999999999999995Z" fill="none" stroke="#555" stroke-width="1.15" stroke-linejoin="round"/></svg>
<span style="left:608.00px;top:10px;font-size:13px;color:#666;letter-spacing:-0.439px">Stav</span>
<svg style="left:733.2px;top:13.3px" width="7.2" height="5.8" viewBox="0 0 7.2 5.8"><path d="M0.8 0.6H6.4L3.6 4.8999999999999995Z" fill="none" stroke="#555" stroke-width="1.15" stroke-linejoin="round"/></svg>
<span style="left:757.60px;top:10px;font-size:13px;color:#666;letter-spacing:-0.136px">Podaná po lhůtě</span>
<svg style="left:872.4px;top:13.3px" width="7.2" height="5.8" viewBox="0 0 7.2 5.8"><path d="M0.8 0.6H6.4L3.6 4.8999999999999995Z" fill="none" stroke="#555" stroke-width="1.15" stroke-linejoin="round"/></svg>
<span style="left:897.70px;top:10px;font-size:13px;color:#666;letter-spacing:-0.094px">Listinná podoba</span>
<svg style="left:1012.7px;top:13.3px" width="7.2" height="5.8" viewBox="0 0 7.2 5.8"><path d="M0.8 0.6H6.4L3.6 4.8999999999999995Z" fill="none" stroke="#555" stroke-width="1.15" stroke-linejoin="round"/></svg>
<span style="left:1037.70px;top:10px;font-size:13px;color:#666;letter-spacing:-0.266px">Označena jako nepodaná</span>
<svg style="left:1204.5px;top:13.3px" width="7.2" height="5.8" viewBox="0 0 7.2 5.8"><path d="M0.8 0.6H6.4L3.6 4.8999999999999995Z" fill="none" stroke="#555" stroke-width="1.15" stroke-linejoin="round"/></svg>
</div>
<div class="row" style="top:77px;">
<svg style="left:11.6px;top:9.0px" width="18" height="6" viewBox="0 0 18 6"><g fill="none" stroke="#2b7bb9" stroke-width="1.2"><circle cx="2.6" cy="3" r="1.75"/><circle cx="8.4" cy="3" r="1.75"/><circle cx="14.3" cy="3" r="1.75"/></g></svg>
<svg style="left:36.9px;top:3.0px" width="18" height="18" viewBox="0 0 18 18"><circle cx="9" cy="9" r="7.5" fill="none" stroke="#2b7bb9" stroke-width="1.15"/><circle cx="9" cy="5.3" r="0.85" fill="#2b7bb9"/><path d="M7.9 7.6H9.2V12Q9.2 12.6 10.2 12.5" fill="none" stroke="#2b7bb9" stroke-width="1.1" stroke-linecap="round"/></svg>
<span style="left:73.70px;top:6px;font-size:13px">001</span>
<span style="left:153.60px;top:6px;font-size:13px;letter-spacing:-0.106px">Dodavatel - školení 2</span>
<span style="left:358.20px;top:6px;font-size:13px;letter-spacing:-0.006px">12345678</span>
<span style="left:457.80px;top:6px;font-size:13px;letter-spacing:-0.088px">30. 5. 2025 12:50</span>
<span style="left:608.00px;top:6px;font-size:13px;letter-spacing:-0.203px">Otevírání zahájeno</span>
<svg style="left:815.6px;top:6.3px" width="10" height="10" viewBox="0 0 10 10"><path d="M1.3 1.4L8.7 8.6M8.7 1.4L1.3 8.6" stroke="#cf2a2c" stroke-width="1.9" stroke-linecap="butt"/></svg>
<svg style="left:955.4px;top:6.3px" width="10" height="10" viewBox="0 0 10 10"><path d="M1.3 1.4L8.7 8.6M8.7 1.4L1.3 8.6" stroke="#cf2a2c" stroke-width="1.9" stroke-linecap="butt"/></svg>
<svg style="left:1121.6px;top:6.3px" width="10" height="10" viewBox="0 0 10 10"><path d="M1.3 1.4L8.7 8.6M8.7 1.4L1.3 8.6" stroke="#cf2a2c" stroke-width="1.9" stroke-linecap="butt"/></svg>
</div>
<div class="row" style="top:102px;">
<svg style="left:11.6px;top:9.0px" width="18" height="6" viewBox="0 0 18 6"><g fill="none" stroke="#2b7bb9" stroke-width="1.2"><circle cx="2.6" cy="3" r="1.75"/><circle cx="8.4" cy="3" r="1.75"/><circle cx="14.3" cy="3" r="1.75"/></g></svg>
<svg style="left:36.9px;top:3.0px" width="18" height="18" viewBox="0 0 18 18"><circle cx="9" cy="9" r="7.5" fill="none" stroke="#2b7bb9" stroke-width="1.15"/><circle cx="9" cy="5.3" r="0.85" fill="#2b7bb9"/><path d="M7.9 7.6H9.2V12Q9.2 12.6 10.2 12.5" fill="none" stroke="#2b7bb9" stroke-width="1.1" stroke-linecap="round"/></svg>
<span style="left:73.70px;top:6px;font-size:13px">002</span>
<span style="left:153.60px;top:6px;font-size:13px;letter-spacing:-0.106px">Dodavatel - školení 3</span>
<span style="left:358.20px;top:6px;font-size:13px;letter-spacing:-0.006px">12345678</span>
<span style="left:457.80px;top:6px;font-size:13px;letter-spacing:-0.088px">30. 5. 2025 12:51</span>
<span style="left:608.00px;top:6px;font-size:13px;letter-spacing:-0.203px">Otevírání zahájeno</span>
<svg style="left:815.6px;top:6.3px" width="10" height="10" viewBox="0 0 10 10"><path d="M1.3 1.4L8.7 8.6M8.7 1.4L1.3 8.6" stroke="#cf2a2c" stroke-width="1.9" stroke-linecap="butt"/></svg>
<svg style="left:955.4px;top:6.3px" width="10" height="10" viewBox="0 0 10 10"><path d="M1.3 1.4L8.7 8.6M8.7 1.4L1.3 8.6" stroke="#cf2a2c" stroke-width="1.9" stroke-linecap="butt"/></svg>
<svg style="left:1121.6px;top:6.3px" width="10" height="10" viewBox="0 0 10 10"><path d="M1.3 1.4L8.7 8.6M8.7 1.4L1.3 8.6" stroke="#cf2a2c" stroke-width="1.9" stroke-linecap="butt"/></svg>
</div>
<div class="row" style="top:127px;">
<svg style="left:11.6px;top:9.0px" width="18" height="6" viewBox="0 0 18 6"><g fill="none" stroke="#2b7bb9" stroke-width="1.2"><circle cx="2.6" cy="3" r="1.75"/><circle cx="8.4" cy="3" r="1.75"/><circle cx="14.3" cy="3" r="1.75"/></g></svg>
<svg style="left:36.9px;top:3.0px" width="18" height="18" viewBox="0 0 18 18"><circle cx="9" cy="9" r="7.5" fill="none" stroke="#2b7bb9" stroke-width="1.15"/><circle cx="9" cy="5.3" r="0.85" fill="#2b7bb9"/><path d="M7.9 7.6H9.2V12Q9.2 12.6 10.2 12.5" fill="none" stroke="#2b7bb9" stroke-width="1.1" stroke-linecap="round"/></svg>
<span style="left:73.70px;top:6px;font-size:13px">003</span>
<span style="left:153.60px;top:6px;font-size:13px;letter-spacing:-0.106px">Dodavatel - školení 4</span>
<span style="left:358.20px;top:6px;font-size:13px;letter-spacing:-0.006px">12345678</span>
<span style="left:457.80px;top:6px;font-size:13px;letter-spacing:-0.088px">30. 5. 2025 12:52</span>
<span style="left:608.00px;top:6px;font-size:13px;letter-spacing:-0.203px">Otevírání zahájeno</span>
<svg style="left:815.6px;top:6.3px" width="10" height="10" viewBox="0 0 10 10"><path d="M1.3 1.4L8.7 8.6M8.7 1.4L1.3 8.6" stroke="#cf2a2c" stroke-width="1.9" stroke-linecap="butt"/></svg>
<svg style="left:955.4px;top:6.3px" width="10" height="10" viewBox="0 0 10 10"><path d="M1.3 1.4L8.7 8.6M8.7 1.4L1.3 8.6" stroke="#cf2a2c" stroke-width="1.9" stroke-linecap="butt"/></svg>
<svg style="left:1121.6px;top:6.3px" width="10" height="10" viewBox="0 0 10 10"><path d="M1.3 1.4L8.7 8.6M8.7 1.4L1.3 8.6" stroke="#cf2a2c" stroke-width="1.9" stroke-linecap="butt"/></svg>
</div>
<div class="row" style="top:152px;">
<svg style="left:11.6px;top:9.0px" width="18" height="6" viewBox="0 0 18 6"><g fill="none" stroke="#2b7bb9" stroke-width="1.2"><circle cx="2.6" cy="3" r="1.75"/><circle cx="8.4" cy="3" r="1.75"/><circle cx="14.3" cy="3" r="1.75"/></g></svg>
<svg style="left:36.9px;top:3.0px" width="18" height="18" viewBox="0 0 18 18"><circle cx="9" cy="9" r="7.5" fill="none" stroke="#2b7bb9" stroke-width="1.15"/><circle cx="9" cy="5.3" r="0.85" fill="#2b7bb9"/><path d="M7.9 7.6H9.2V12Q9.2 12.6 10.2 12.5" fill="none" stroke="#2b7bb9" stroke-width="1.1" stroke-linecap="round"/></svg>
<span style="left:73.70px;top:6px;font-size:13px">004</span>
<span style="left:153.60px;top:6px;font-size:13px;letter-spacing:-0.106px">Dodavatel - školení 6</span>
<span style="left:358.20px;top:6px;font-size:13px;letter-spacing:-0.006px">45359326</span>
<span style="left:457.80px;top:6px;font-size:13px;letter-spacing:-0.088px">30. 5. 2025 12:53</span>
<span style="left:608.00px;top:6px;font-size:13px;letter-spacing:-0.203px">Otevírání zahájeno</span>
<svg style="left:815.6px;top:6.3px" width="10" height="10" viewBox="0 0 10 10"><path d="M1.3 1.4L8.7 8.6M8.7 1.4L1.3 8.6" stroke="#cf2a2c" stroke-width="1.9" stroke-linecap="butt"/></svg>
<svg style="left:955.4px;top:6.3px" width="10" height="10" viewBox="0 0 10 10"><path d="M1.3 1.4L8.7 8.6M8.7 1.4L1.3 8.6" stroke="#cf2a2c" stroke-width="1.9" stroke-linecap="butt"/></svg>
<svg style="left:1121.6px;top:6.3px" width="10" height="10" viewBox="0 0 10 10"><path d="M1.3 1.4L8.7 8.6M8.7 1.4L1.3 8.6" stroke="#cf2a2c" stroke-width="1.9" stroke-linecap="butt"/></svg>
</div>
<div class="row" style="top:177px;">
<svg style="left:11.6px;top:9.0px" width="18" height="6" viewBox="0 0 18 6"><g fill="none" stroke="#2b7bb9" stroke-width="1.2"><circle cx="2.6" cy="3" r="1.75"/><circle cx="8.4" cy="3" r="1.75"/><circle cx="14.3" cy="3" r="1.75"/></g></svg>
<svg style="left:36.9px;top:3.0px" width="18" height="18" viewBox="0 0 18 18"><circle cx="9" cy="9" r="7.5" fill="none" stroke="#2b7bb9" stroke-width="1.15"/><circle cx="9" cy="5.3" r="0.85" fill="#2b7bb9"/><path d="M7.9 7.6H9.2V12Q9.2 12.6 10.2 12.5" fill="none" stroke="#2b7bb9" stroke-width="1.1" stroke-linecap="round"/></svg>
<span style="left:73.70px;top:6px;font-size:13px">005</span>
<span style="left:153.60px;top:6px;font-size:13px;letter-spacing:-0.106px">Dodavatel - školení 6</span>
<span style="left:358.20px;top:6px;font-size:13px;letter-spacing:-0.006px">45359326</span>
<span style="left:457.80px;top:6px;font-size:13px;letter-spacing:-0.088px">30. 5. 2025 12:59</span>
<span style="left:608.00px;top:6px;font-size:13px;letter-spacing:-0.203px">Otevírání zahájeno</span>
<svg style="left:815.6px;top:6.3px" width="10" height="10" viewBox="0 0 10 10"><path d="M1.3 1.4L8.7 8.6M8.7 1.4L1.3 8.6" stroke="#cf2a2c" stroke-width="1.9" stroke-linecap="butt"/></svg>
<svg style="left:954.4px;top:6.3px" width="12" height="10" viewBox="0 0 12 10"><path d="M1.3 5.2L4.6 8.3L11 1.5" fill="none" stroke="#2db52d" stroke-width="2.2"/></svg>
<svg style="left:1121.6px;top:6.3px" width="10" height="10" viewBox="0 0 10 10"><path d="M1.3 1.4L8.7 8.6M8.7 1.4L1.3 8.6" stroke="#cf2a2c" stroke-width="1.9" stroke-linecap="butt"/></svg>
</div>
<div class="row" style="top:202px;border-bottom:none;">
<svg style="left:11.6px;top:9.0px" width="18" height="6" viewBox="0 0 18 6"><g fill="none" stroke="#2b7bb9" stroke-width="1.2"><circle cx="2.6" cy="3" r="1.75"/><circle cx="8.4" cy="3" r="1.75"/><circle cx="14.3" cy="3" r="1.75"/></g></svg>
<svg style="left:36.9px;top:3.0px" width="18" height="18" viewBox="0 0 18 18"><circle cx="9" cy="9" r="7.5" fill="none" stroke="#2b7bb9" stroke-width="1.15"/><circle cx="9" cy="5.3" r="0.85" fill="#2b7bb9"/><path d="M7.9 7.6H9.2V12Q9.2 12.6 10.2 12.5" fill="none" stroke="#2b7bb9" stroke-width="1.1" stroke-linecap="round"/></svg>
<span style="left:73.70px;top:6px;font-size:13px">006</span>
<span style="left:153.60px;top:6px;font-size:13px;letter-spacing:-0.106px">Dodavatel - školení 7</span>
<span style="left:358.20px;top:6px;font-size:13px;letter-spacing:-0.006px">12345678</span>
<span style="left:457.80px;top:6px;font-size:13px;letter-spacing:-0.088px">30. 5. 2025 13:22</span>
<span style="left:608.00px;top:6px;font-size:13px;letter-spacing:-0.007px">Podána po lhůtě</span>
<svg style="left:814.6px;top:6.3px" width="12" height="10" viewBox="0 0 12 10"><path d="M1.3 5.2L4.6 8.3L11 1.5" fill="none" stroke="#2db52d" stroke-width="2.2"/></svg>
<svg style="left:955.4px;top:6.3px" width="10" height="10" viewBox="0 0 10 10"><path d="M1.3 1.4L8.7 8.6M8.7 1.4L1.3 8.6" stroke="#cf2a2c" stroke-width="1.9" stroke-linecap="butt"/></svg>
<svg style="left:1121.6px;top:6.3px" width="10" height="10" viewBox="0 0 10 10"><path d="M1.3 1.4L8.7 8.6M8.7 1.4L1.3 8.6" stroke="#cf2a2c" stroke-width="1.9" stroke-linecap="butt"/></svg>
</div>
</div>
<div style="left:147px;top:301px;width:190px;height:41px;border:1px solid #e0242b;box-sizing:border-box"></div>
</div>
</body></html>
